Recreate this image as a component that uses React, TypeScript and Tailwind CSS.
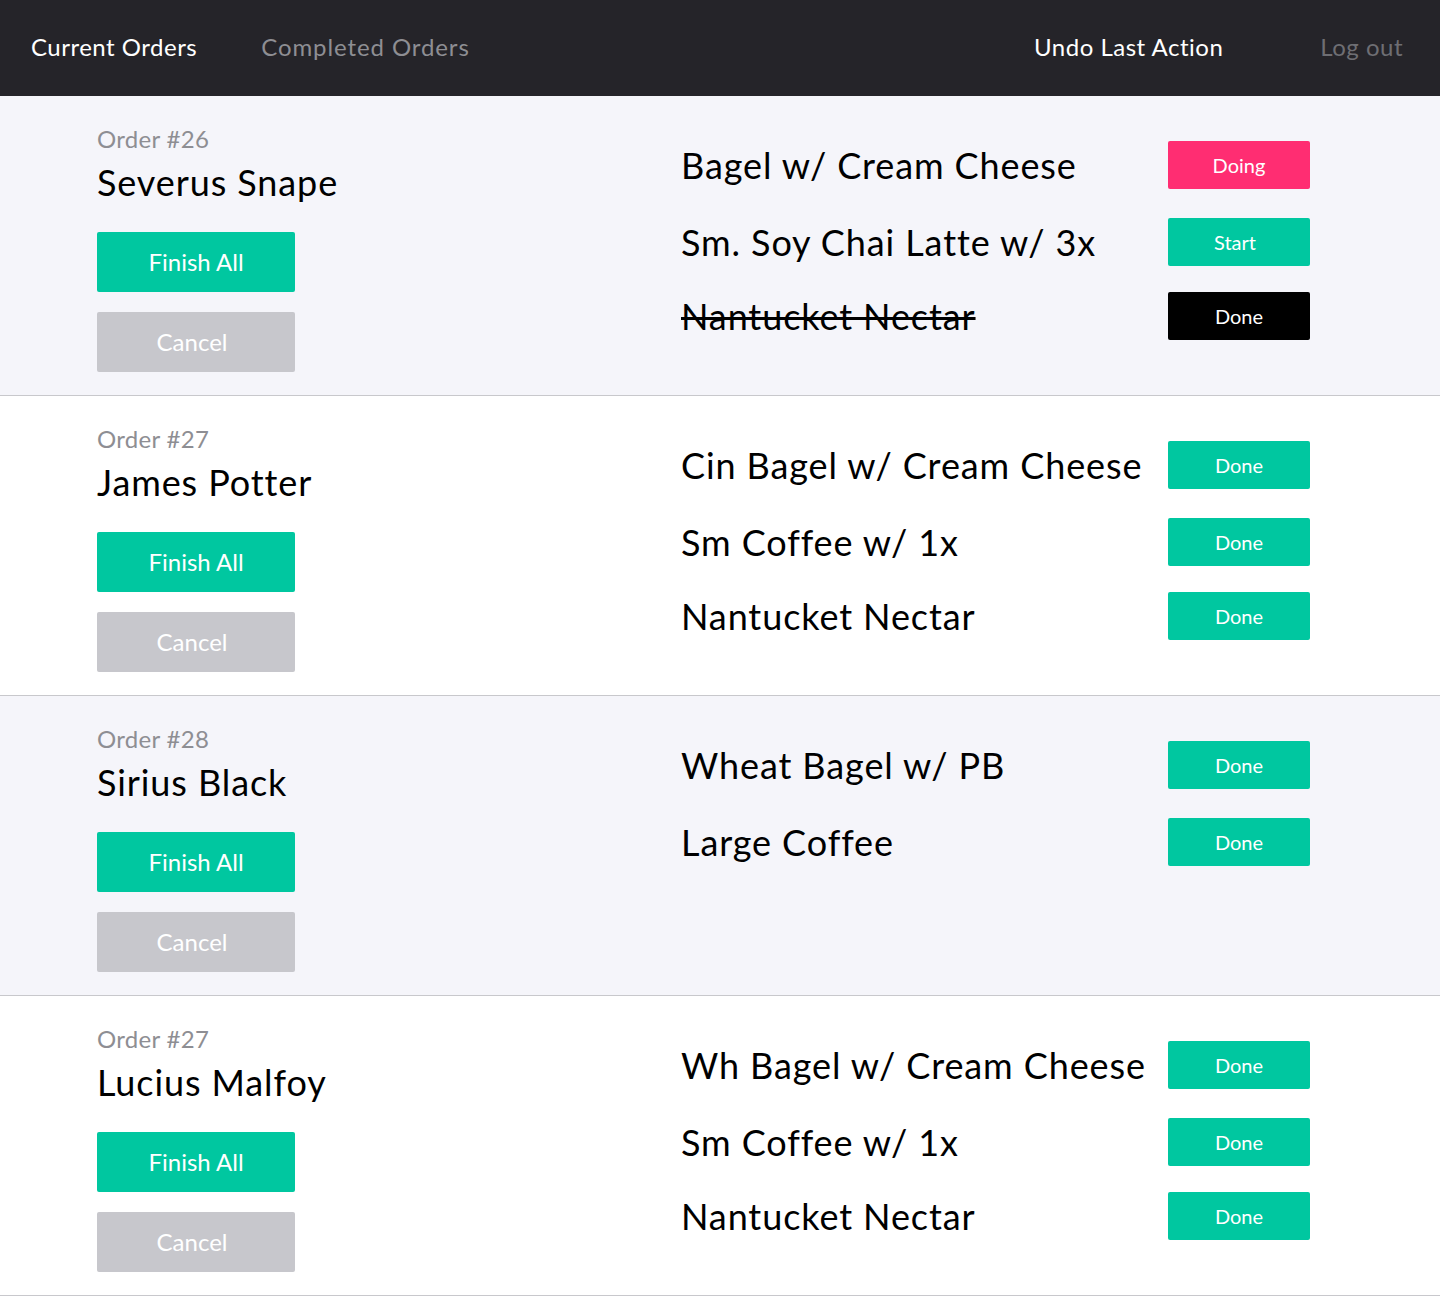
import React from 'react';

type Item = { name: string; status: 'Doing' | 'Start' | 'Done' | 'Finished' };
type Order = { id: number; customer: string; items: Item[] };

const orders: Order[] = [
  {
    id: 26,
    customer: 'Severus Snape',
    items: [
      { name: 'Bagel w/ Cream Cheese', status: 'Doing' },
      { name: 'Sm. Soy Chai Latte w/ 3x', status: 'Start' },
      { name: 'Nantucket Nectar', status: 'Finished' },
    ],
  },
  {
    id: 27,
    customer: 'James Potter',
    items: [
      { name: 'Cin Bagel w/ Cream Cheese', status: 'Done' },
      { name: 'Sm Coffee w/ 1x', status: 'Done' },
      { name: 'Nantucket Nectar', status: 'Done' },
    ],
  },
  {
    id: 28,
    customer: 'Sirius Black',
    items: [
      { name: 'Wheat Bagel w/ PB', status: 'Done' },
      { name: 'Large Coffee', status: 'Done' },
    ],
  },
  {
    id: 27,
    customer: 'Lucius Malfoy',
    items: [
      { name: 'Wh Bagel w/ Cream Cheese', status: 'Done' },
      { name: 'Sm Coffee w/ 1x', status: 'Done' },
      { name: 'Nantucket Nectar', status: 'Done' },
    ],
  },
];

const rowGap = ['mt-[45px]', 'mt-[29px]', 'mt-[26px]'];

function StatusButton({ status }: { status: Item['status'] }) {
  if (status === 'Doing') {
    return <button className="h-[48px] w-[142px] rounded-[2px] bg-[#ff2d72] text-[20px] text-white">Doing</button>;
  }
  if (status === 'Start') {
    return <button className="h-[48px] w-[142px] rounded-[2px] bg-[#00c7a0] pr-[8px] text-[20px] text-white">Start</button>;
  }
  if (status === 'Finished') {
    return <button className="h-[48px] w-[142px] rounded-[2px] bg-black text-[20px] text-white">Done</button>;
  }
  return <button className="h-[48px] w-[142px] rounded-[2px] bg-[#00c7a0] text-[20px] text-white">Done</button>;
}

function OrderRow({ order, shaded }: { order: Order; shaded: boolean }) {
  return (
    <section
      className={`flex h-[300px] border-b border-[#c8c8cc] ${shaded ? 'bg-[#f5f5fa]' : 'bg-white'}`}
    >
      <div className="flex w-[681px] flex-col pl-[97px] pt-[29px]">
        <div className="text-[24px] leading-[28px] tracking-[0.3px] text-[#8e8e93]">Order #{order.id}</div>
        <div className="mt-[7px] text-[36px] leading-[44px] tracking-[0.9px] text-black">{order.customer}</div>
        <button className="mt-[28px] h-[60px] w-[198px] rounded-[2px] bg-[#00c7a0] text-[24px] text-white">
          Finish All
        </button>
        <button className="mt-[20px] h-[60px] w-[198px] rounded-[2px] bg-[#c7c7cc] pr-[8px] text-[24px] text-white">
          Cancel
        </button>
      </div>
      <div className="flex flex-1 flex-col pr-[130px]">
        {order.items.map((item, i) => (
          <div key={i} className={`flex h-[48px] items-center ${rowGap[i]}`}>
            <span
              className={`flex-1 text-[36px] leading-[44px] tracking-[0.9px] text-black ${
                item.status === 'Finished' ? 'line-through decoration-[3px]' : ''
              }`}
            >
              {item.name}
            </span>
            <StatusButton status={item.status} />
          </div>
        ))}
      </div>
    </section>
  );
}

export default function App() {
  return (
    <div className="min-h-[1296px] bg-white font-['Lato',sans-serif]">
      <header className="flex h-[96px] items-center bg-[#252429] pb-[2px] text-[24px] tracking-[0.5px]">
        <a className="ml-[31px] text-white">Current Orders</a>
        <a className="ml-[64px] tracking-[0.9px] text-[#8e8e93]">Completed Orders</a>
        <a className="ml-auto text-white">Undo Last Action</a>
        <a className="ml-[97px] mr-[37px] text-[#6e6e73]">Log out</a>
      </header>
      {orders.map((order, i) => (
        <OrderRow key={i} order={order} shaded={i % 2 === 0} />
      ))}
    </div>
  );
}
